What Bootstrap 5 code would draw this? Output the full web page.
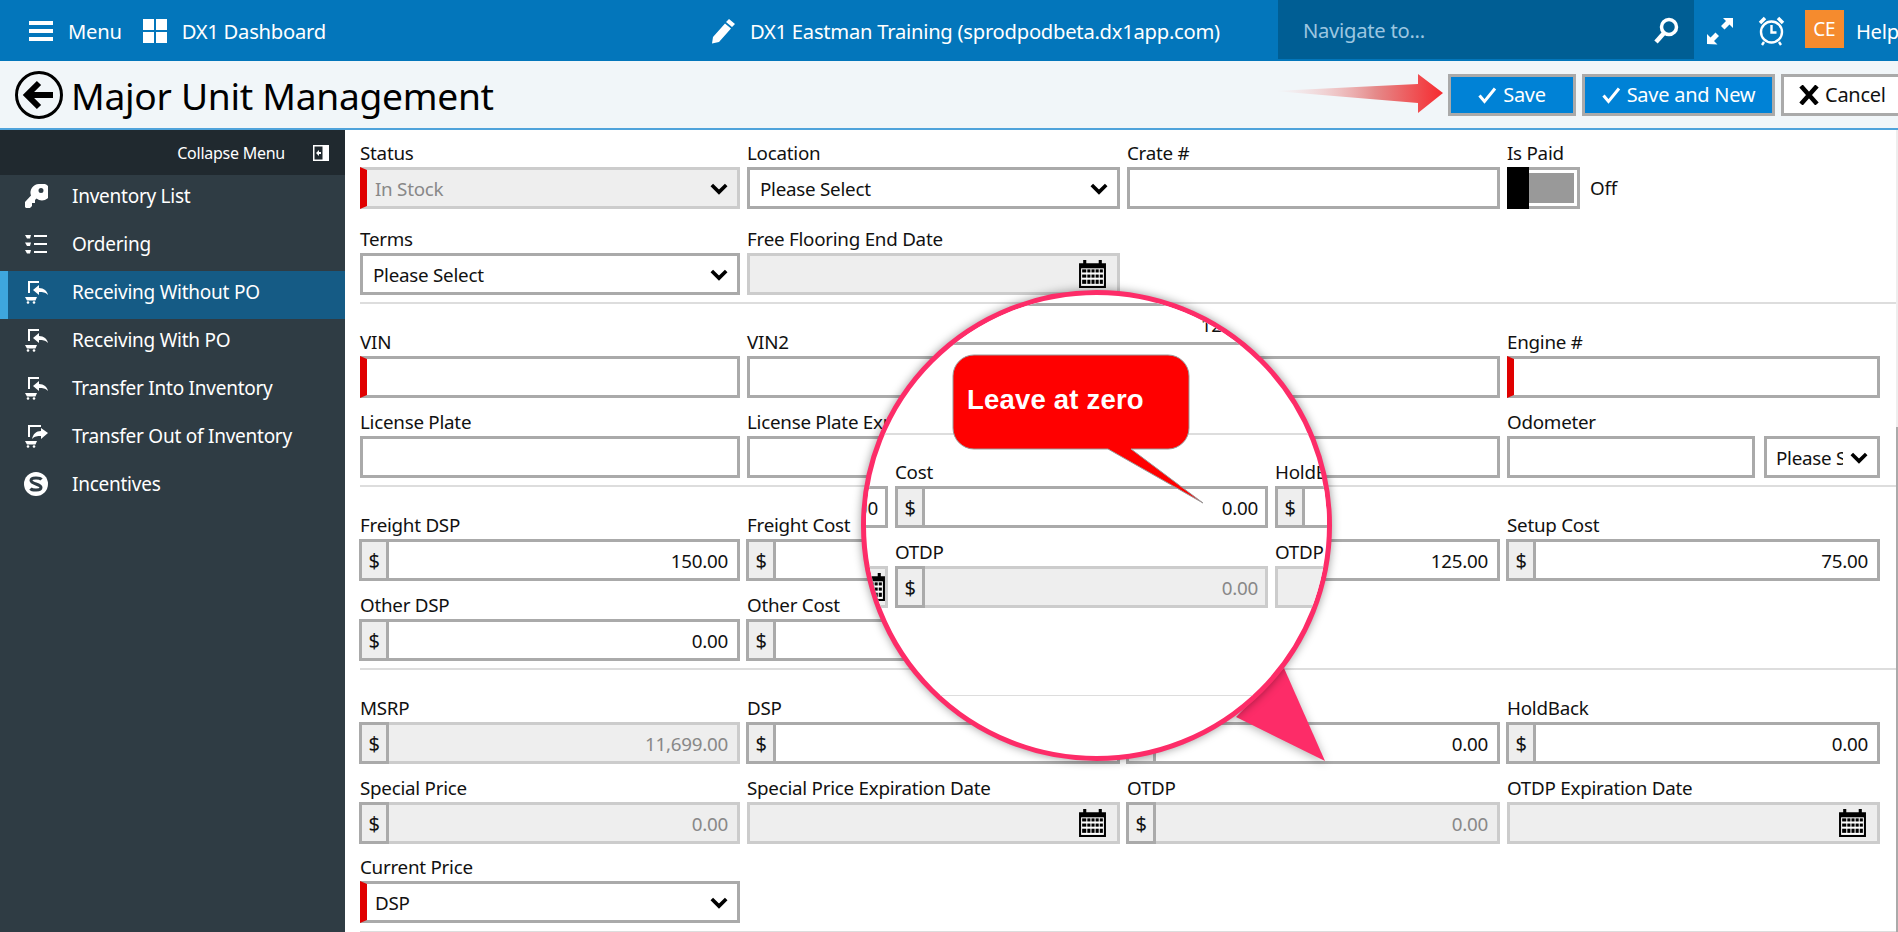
<!DOCTYPE html>
<html lang="en">
<head>
<meta charset="utf-8">
<title>Major Unit Management</title>
<link href="https://cdn.jsdelivr.net/npm/bootstrap@5.3.0/dist/css/bootstrap.min.css" rel="stylesheet">
<style>
:root{--bs-border-radius:0;--seg:"Noto Sans","Open Sans",sans-serif}
html,body{height:932px;overflow:hidden}
body{font-family:var(--seg);font-size:18.800px;color:#111;letter-spacing:-.25px}
.app-root{position:relative;width:1898px;height:932px;overflow:hidden}
.top-bar{height:61px;background:#0376bb;color:#fff;font-size:20.200px;padding:0 0 0 29px;flex-wrap:nowrap;align-items:flex-start}
.top-item{height:61px;display:flex;align-items:center;flex-shrink:0;padding-top:1px;gap:15px}
.top-nav-box{width:416px;height:59px;background:#005e94;color:#9cc6e0;display:flex;align-items:center;justify-content:space-between;padding:1px 15px 0 25px;margin-left:58px;flex-shrink:0}
.ce-box{width:39px;height:38px;background:#f58b2e;display:flex;align-items:center;justify-content:center;margin:10px 12px 0 20px;font-size:19px;flex-shrink:0}
.head-band{height:69px;background:#f1f6f9;border-bottom:2px solid #4fa3db;padding:0 0 0 15px;flex-wrap:nowrap;position:relative}
.page-title{font-size:37.200px;line-height:1;margin:3px 0 0 8px;font-weight:400;color:#000;letter-spacing:-.3px}
.btn-wrap{margin-left:auto;margin-right:-7px;margin-top:1px;gap:6px;flex-shrink:0}
.btn-act{height:42px;border:3px solid #aaa;border-radius:0;background:#0082d6;color:#fff;font-size:20px;padding:0 12px;display:flex;align-items:center;justify-content:center;gap:6px;letter-spacing:-.25px}
.btn-act.b-save{width:128px}.btn-act.b-new{width:193px}
.btn-act.b-cancel{width:124px;background:#fff;color:#111;justify-content:flex-start;padding-left:15px;gap:6px}
.side-pane{width:345px;background:#2f3c44;flex-shrink:0;height:802px}
.side-head{height:45px;background:#20292f;color:#fff;font-size:16px;padding-right:16px;gap:28px}
.side-link{height:48px;color:#fff;display:flex;align-items:center;font-size:19px;padding-left:24px;gap:24px;text-decoration:none;padding-bottom:6px}
.side-link svg{width:24px;height:24px;flex-shrink:0}
.side-link.is-on{background:#155b85;border-left:8px solid #3ea6dd;padding-left:16px}
.work-pane{flex:1;padding:13px 0 0 15px;overflow:hidden;position:relative;height:802px;background:#fff}
.fgrid{display:grid;grid-template-columns:380px 373px 373px 373px;column-gap:7px}
.fgrid+.fgrid{margin-top:14px}
.fgrid.wide-gap+.fgrid.wide-gap{margin-top:20px}
.fgrid.tight+.fgrid.tight{margin-top:13px}
.f-label{display:block;height:24px;line-height:21px;margin:0;font-size:18.800px;white-space:nowrap}
.form-control,.form-select{height:42px;border:3px solid #aaa;border-radius:0;font-size:18.800px;font-family:var(--seg);color:#111;padding:2px 9px 0;box-shadow:none;letter-spacing:-.25px}
.form-select{padding-left:10px;padding-right:34px;background-image:url("data:image/svg+xml,%3Csvg xmlns='http://www.w3.org/2000/svg' viewBox='0 0 20 14'%3E%3Cpath d='M2 3l8 8 8-8' fill='none' stroke='%23000' stroke-width='4'/%3E%3C/svg%3E");background-size:18px 13px;background-position:right 9px center}
.form-control:disabled,.form-select:disabled{background-color:#eee;border-color:#ccc;color:#888;opacity:1}
.req{border-left:7px solid #e00000!important;padding-left:8px}
.form-control:disabled.req,.form-select:disabled.req{border-left-color:#e00000}
.num{text-align:right}
.input-group.grp{margin-left:-1px;width:calc(100% + 1px);flex-wrap:nowrap}
.grp .input-group-text{width:30px;height:42px;padding:2px 0 0;justify-content:center;border:3px solid #aaa;background:#eee;border-radius:0;font-size:20px;color:#111;flex-shrink:0}
.grp>.form-control{margin-left:0!important;border-left:0;border-radius:0}
.sep{height:2px;background:#ddd;border:0;margin:0;opacity:1}
.sep-a{margin-top:7px;margin-bottom:28px}
.sep-b{margin-top:7px;margin-bottom:28px}
.date-wrap{position:relative}
.date-wrap svg{position:absolute;right:13px;top:6px;width:29px;height:29px}
.tog{width:73px;height:42px;border:3px solid #aaa;border-left:0;background:#fff;position:relative;padding:3px 3px 3px 22px;flex-shrink:0}
.tog::before{content:"";position:absolute;left:0;top:-3px;bottom:-3px;width:22px;background:#000}
.tog i{display:block;width:100%;height:100%;background:#999}
.off-text{margin-left:2px}
.mini-scroll{position:absolute;right:0;top:0;bottom:0;width:2px;background:#eee}
.mini-scroll i{position:absolute;left:0;right:0;top:297px;bottom:0;background:#aaa}
.lens-tail{position:absolute;left:1225px;top:660px;width:110px;height:110px;filter:drop-shadow(0 2px 5px rgba(0,0,0,.3));z-index:5}
.lens{position:absolute;left:861px;top:290px;width:471px;height:471px;border-radius:50%;border:5px solid #fd2c68;background:#fff;overflow:hidden;box-shadow:0 0 10px rgba(0,0,0,.4);z-index:6}
.lens .num{padding-right:7px}
.lens-in{width:1100px;padding-top:8px}
.lens-grid{display:grid;grid-template-columns:222px 373px 373px;column-gap:7px;margin-left:-200px}
.lens-first{width:402px}
.lens-line{height:2px;background:#ddd;margin:88px 0 27px;width:600px}
.lens-thin{height:1px;background:#ddd;margin-top:87px;width:600px}
.lens-grid .input-group.grp{margin-left:0;width:100%}
.lens-grid+.lens-grid{margin-top:14px}
.callout{position:absolute;left:950px;top:352px;width:260px;height:156px;z-index:7}
.callout svg{position:absolute;inset:0;width:100%;height:100%}
.callout b{position:absolute;left:17px;top:32px;color:#fff;font:700 27.500px/32px "Liberation Sans",Arial,sans-serif;letter-spacing:.2px;white-space:nowrap}
.red-arrow{position:absolute;left:1274px;top:72px;width:172px;height:42px;z-index:3}
</style>
</head>
<body>
<div class="app-root">
  <nav class="navbar top-bar d-flex">
    <div class="top-item">
      <svg width="24" height="20" viewBox="0 0 24 20" fill="#fff"><rect width="24" height="4"/><rect y="8" width="24" height="4"/><rect y="16" width="24" height="4"/></svg>
      <span>Menu</span>
    </div>
    <div class="top-item" style="margin-left:21px">
      <svg width="24" height="24" viewBox="0 0 24 24" fill="#fff"><rect width="11" height="11"/><rect x="13" width="11" height="11"/><rect y="13" width="11" height="11"/><rect x="13" y="13" width="11" height="11"/></svg>
      <span>DX1 Dashboard</span>
    </div>
    <div class="top-item" style="margin-left:384px;gap:14px">
      <svg width="26" height="26" viewBox="0 0 26 26" fill="#fff"><path d="M19 1l6 5-3 3-6-5zM15 5.500l6 5L9 24 2 25.500 3 19z"/></svg>
      <span>DX1 Eastman Training (sprodpodbeta.dx1app.com)</span>
    </div>
    <div class="top-nav-box">
      <span>Navigate to...</span>
      <svg width="26" height="27" viewBox="0 0 26 27" fill="none" stroke="#fff"><circle cx="16" cy="10" r="7.500" stroke-width="3.500"/><path d="M11 16L3 25" stroke-width="4.500"/></svg>
    </div>
    <div class="top-item" style="margin-left:12px">
      <svg width="28" height="28" viewBox="0 0 28 28" fill="#fff"><path d="M17 1h10v10l-3.500-3.500-5 5-3.500-3.500 5-5zM1 27V17l3.500 3.500 5-5 3.500 3.500-5 5 3.500 3.500z"/></svg>
    </div>
    <div class="top-item" style="margin-left:24px">
      <svg width="27" height="30" viewBox="0 0 27 30" fill="none" stroke="#fff" stroke-width="2.400"><circle cx="13.500" cy="16" r="10.500"/><path d="M13.500 9v7.500h5"/><path d="M2 7l5-5M25 7l-5-5" stroke-width="3.500"/><path d="M6 26l-2 3M21 26l2 3"/></svg>
    </div>
    <div class="ce-box">CE</div>
    <div class="top-item">Help</div>
  </nav>

  <div class="head-band d-flex align-items-center">
    <svg width="48" height="48" viewBox="0 0 48 48" fill="none" stroke="#000" class="flex-shrink-0"><circle cx="24" cy="24" r="22.500" stroke-width="3"/><path d="M38 24H15" stroke-width="6"/><path d="M24 12L12 24l12 12" stroke-width="6"/></svg>
    <h1 class="page-title">Major Unit Management</h1>
    <div class="btn-wrap d-flex">
      <button type="button" class="btn btn-act b-save"><svg width="19" height="17" viewBox="0 0 19 17" fill="none" stroke="#fff" stroke-width="3"><path d="M1.500 8.500l5 6L17 1.500"/></svg> Save</button>
      <button type="button" class="btn btn-act b-new"><svg width="19" height="17" viewBox="0 0 19 17" fill="none" stroke="#fff" stroke-width="3"><path d="M1.500 8.500l5 6L17 1.500"/></svg> Save and New</button>
      <button type="button" class="btn btn-act b-cancel"><svg width="20" height="20" viewBox="0 0 20 20" stroke="#000" stroke-width="4.500"><path d="M2 1l16 18M18 1L2 19"/></svg> Cancel</button>
    </div>
  </div>

  <div class="d-flex">
    <aside class="side-pane">
      <div class="side-head d-flex align-items-center justify-content-end">
        <span>Collapse Menu</span>
        <svg width="16" height="16" viewBox="0 0 16 16"><rect width="16" height="16" fill="#fff"/><rect x="1.500" y="1.500" width="8" height="13" fill="#20292f"/><path d="M3 8l3-3v2h2v2H6v2z" fill="#fff"/></svg>
      </div>
      <a class="side-link" href="#"><svg viewBox="0 0 24 24"><path fill="#fff" fill-rule="evenodd" d="M15 0a8.500 8.500 0 0 0-8 11.500L1 18v5l1 1h4l2-2v-3h3v-3l1.500-1.500A8.500 8.500 0 1 0 15 0zm2 4a2.500 2.500 0 1 1 0 5 2.500 2.500 0 0 1 0-5z"/></svg>Inventory List</a>
      <a class="side-link" href="#"><svg viewBox="0 0 24 24" fill="#fff"><path d="M1 3h6l-1 3.500H3zM1 10.500h6l-1 3.500H3zM1 18h6l-1 3.500H3z"/><rect x="10" y="3" width="13" height="2"/><rect x="10" y="11" width="13" height="2"/><rect x="10" y="19" width="13" height="2"/></svg>Ordering</a>
      <a class="side-link is-on" href="#"><svg viewBox="0 0 24 24" fill="#fff"><path d="M4 1h11v2H6v10H4z"/><path d="M9 10l6-5v3c5 0 8 3 9 7-3-3-5-3-9-3v3z"/><path d="M1 17h12l-1.500 3.500H3z"/><circle cx="4" cy="22.500" r="1.300"/><circle cx="10" cy="22.500" r="1.300"/></svg>Receiving Without PO</a>
      <a class="side-link" href="#"><svg viewBox="0 0 24 24" fill="#fff"><path d="M4 1h11v2H6v10H4z"/><path d="M9 10l6-5v3c5 0 8 3 9 7-3-3-5-3-9-3v3z"/><path d="M1 17h12l-1.500 3.500H3z"/><circle cx="4" cy="22.500" r="1.300"/><circle cx="10" cy="22.500" r="1.300"/></svg>Receiving With PO</a>
      <a class="side-link" href="#"><svg viewBox="0 0 24 24" fill="#fff"><path d="M4 1h11v2H6v10H4z"/><path d="M9 10l6-5v3c5 0 8 3 9 7-3-3-5-3-9-3v3z"/><path d="M1 17h12l-1.500 3.500H3z"/><circle cx="4" cy="22.500" r="1.300"/><circle cx="10" cy="22.500" r="1.300"/></svg>Transfer Into Inventory</a>
      <a class="side-link" href="#"><svg viewBox="0 0 24 24" fill="#fff"><path d="M4 1h13v2H6v10H4z"/><path d="M24 9l-7-5v3c-5 0-8 3-9 8 3-3 5-3 9-3v3z"/><path d="M1 17h12l-1.500 3.500H3z"/><circle cx="4" cy="22.500" r="1.300"/><circle cx="10" cy="22.500" r="1.300"/></svg>Transfer Out of Inventory</a>
      <a class="side-link" href="#"><svg viewBox="0 0 24 24"><circle cx="12" cy="12" r="12" fill="#fff"/><path d="M17.500 7.500C16 5.500 7 5 7 8.500s10 3.500 10 7-9 3-10.500 1" fill="none" stroke="#2f3c44" stroke-width="3"/></svg>Incentives</a>
    </aside>

    <main class="work-pane">
      <div class="fgrid wide-gap">
        <div><label class="f-label">Status</label><select class="form-select req" disabled><option>In Stock</option></select></div>
        <div><label class="f-label">Location</label><select class="form-select"><option>Please Select</option></select></div>
        <div><label class="f-label">Crate #</label><input class="form-control"></div>
        <div><label class="f-label">Is Paid</label><div class="d-flex align-items-center gap-2"><div class="tog"><i></i></div><span class="off-text">Off</span></div></div>
      </div>
      <div class="fgrid wide-gap">
        <div><label class="f-label">Terms</label><select class="form-select"><option>Please Select</option></select></div>
        <div><label class="f-label">Free Flooring End Date</label><div class="date-wrap"><input class="form-control" disabled><svg viewBox="0 0 28 28"><use href="#cal"/></svg></div></div>
      </div>
      <hr class="sep sep-a">
      <div class="fgrid">
        <div><label class="f-label">VIN</label><input class="form-control req"></div>
        <div><label class="f-label">VIN2</label><input class="form-control"></div>
        <div><label class="f-label">Stock #</label><input class="form-control"></div>
        <div><label class="f-label">Engine #</label><input class="form-control req"></div>
      </div>
      <div class="fgrid">
        <div><label class="f-label">License Plate</label><input class="form-control"></div>
        <div><label class="f-label">License Plate Expiration Date</label><input class="form-control"></div>
        <div><label class="f-label">Key #</label><input class="form-control"></div>
        <div><label class="f-label">Odometer</label><div class="d-flex justify-content-between"><input class="form-control odo-a" style="width:248px"><select class="form-select" style="width:116px;padding-left:9px"><option>Please Select</option></select></div></div>
      </div>
      <hr class="sep sep-b">
      <div class="fgrid">
        <div><label class="f-label">Freight DSP</label><div class="input-group grp"><span class="input-group-text">$</span><input class="form-control num" value="150.00"></div></div>
        <div><label class="f-label">Freight Cost</label><div class="input-group grp"><span class="input-group-text">$</span><input class="form-control num" value="0.00"></div></div>
        <div><label class="f-label">Setup DSP</label><div class="input-group grp"><span class="input-group-text">$</span><input class="form-control num" value="125.00"></div></div>
        <div><label class="f-label">Setup Cost</label><div class="input-group grp"><span class="input-group-text">$</span><input class="form-control num" value="75.00"></div></div>
      </div>
      <div class="fgrid">
        <div><label class="f-label">Other DSP</label><div class="input-group grp"><span class="input-group-text">$</span><input class="form-control num" value="0.00"></div></div>
        <div><label class="f-label">Other Cost</label><div class="input-group grp"><span class="input-group-text">$</span><input class="form-control num" value="0.00"></div></div>
      </div>
      <hr class="sep sep-b">
      <div class="fgrid tight">
        <div><label class="f-label">MSRP</label><div class="input-group grp"><span class="input-group-text">$</span><input class="form-control num" disabled value="11,699.00"></div></div>
        <div><label class="f-label">DSP</label><div class="input-group grp"><span class="input-group-text">$</span><input class="form-control num" value="0.00"></div></div>
        <div><label class="f-label">Cost</label><div class="input-group grp"><span class="input-group-text">$</span><input class="form-control num" value="0.00"></div></div>
        <div><label class="f-label">HoldBack</label><div class="input-group grp"><span class="input-group-text">$</span><input class="form-control num" value="0.00"></div></div>
      </div>
      <div class="fgrid tight" style="margin-top:14px">
        <div><label class="f-label">Special Price</label><div class="input-group grp"><span class="input-group-text">$</span><input class="form-control num" disabled value="0.00"></div></div>
        <div><label class="f-label">Special Price Expiration Date</label><div class="date-wrap"><input class="form-control" disabled><svg viewBox="0 0 28 28"><use href="#cal"/></svg></div></div>
        <div><label class="f-label">OTDP</label><div class="input-group grp"><span class="input-group-text">$</span><input class="form-control num" disabled value="0.00"></div></div>
        <div><label class="f-label">OTDP Expiration Date</label><div class="date-wrap"><input class="form-control" disabled><svg viewBox="0 0 28 28"><use href="#cal"/></svg></div></div>
      </div>
      <div class="fgrid tight">
        <div><label class="f-label">Current Price</label><select class="form-select req"><option>DSP</option></select></div>
      </div>
      <hr class="sep" style="margin-top:8px">
      <div class="mini-scroll"><i></i></div>
    </main>
  </div>

  <svg class="red-arrow" viewBox="0 0 172 42">
    <defs><linearGradient id="rg" x1="0" x2="1" y1="0" y2="0"><stop offset="0" stop-color="#f8d0d0" stop-opacity="0"/><stop offset=".6" stop-color="#e58a8a"/><stop offset="1" stop-color="#f62a2f"/></linearGradient></defs>
    <path d="M0 19L144 12V2L169 21 144 41V31z" fill="url(#rg)"/>
  </svg>

  <svg class="lens-tail" viewBox="0 0 110 110"><path d="M59 8L100 101 11 57z" fill="#fd2c68"/></svg>
  <div class="lens">
    <div class="lens-in">
      <input class="form-control num lens-first" value="125.00">
      <div class="lens-line"></div>
      <div class="lens-grid">
        <div><label class="f-label">&nbsp;</label><input class="form-control num" value="0.00"></div>
        <div><label class="f-label">Cost</label><div class="input-group grp"><span class="input-group-text">$</span><input class="form-control num" value="0.00"></div></div>
        <div><label class="f-label">HoldB</label><div class="input-group grp"><span class="input-group-text">$</span><input class="form-control num" value="0.00"></div></div>
      </div>
      <div class="lens-grid">
        <div><label class="f-label">&nbsp;</label><div class="date-wrap"><input class="form-control" disabled><svg viewBox="0 0 28 28" style="right:2px"><use href="#cal"/></svg></div></div>
        <div><label class="f-label">OTDP</label><div class="input-group grp"><span class="input-group-text">$</span><input class="form-control num" disabled value="0.00"></div></div>
        <div><label class="f-label">OTDP</label><input class="form-control" disabled></div>
      </div>
      <div class="lens-thin"></div>
    </div>
  </div>
  <div class="callout">
    <svg viewBox="0 0 260 156"><path d="M24 3H218a21 21 0 0 1 21 21V76a21 21 0 0 1-21 21H181L253 151 158 97H24A21 21 0 0 1 3 76V24A21 21 0 0 1 24 3z" fill="#f00" stroke="#999" stroke-width="1"/></svg>
    <b>Leave at zero</b>
  </div>

  <svg width="0" height="0" class="position-absolute"><defs><g id="cal"><path d="M1 4h4V1h3v3h12V1h3v3h4v24H1z" fill="#000"/><rect x="3" y="9" width="22" height="17" fill="#fff"/><g fill="#000"><rect x="4" y="10" width="4" height="3"/><rect x="9" y="10" width="3" height="3"/><rect x="13" y="10" width="3" height="3"/><rect x="17" y="10" width="3" height="3"/><rect x="21" y="10" width="3" height="3"/><rect x="4" y="15" width="4" height="3"/><rect x="9" y="15" width="3" height="3"/><rect x="13" y="15" width="3" height="3"/><rect x="17" y="15" width="3" height="3"/><rect x="21" y="15" width="3" height="3"/><rect x="4" y="20" width="4" height="4"/><rect x="9" y="20" width="3" height="4"/><rect x="13" y="20" width="3" height="4"/><rect x="17" y="20" width="3" height="4"/><rect x="21" y="20" width="3" height="4"/></g></g></defs></svg>
</div>
<script src="https://cdn.jsdelivr.net/npm/bootstrap@5.3.0/dist/js/bootstrap.bundle.min.js"></script>
</body>
</html>
